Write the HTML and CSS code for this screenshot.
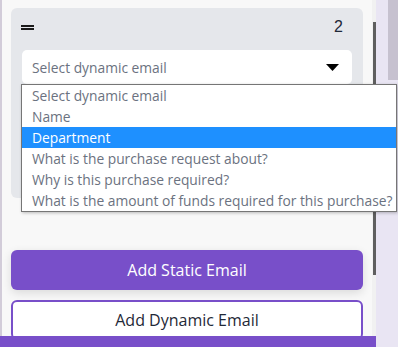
FILE: index.html
```html
<!DOCTYPE html>
<html lang="en">
<head>
<meta charset="utf-8">
<title>Email selector</title>
<link rel="stylesheet" href="styles.css">
</head>
<body>
<div class="app">
  <div class="edge"></div>
  <main class="panel">
    <section class="card">
      <div class="card-head">
        <span class="handle"><span></span><span></span></span>
        <span class="num">2</span>
      </div>
      <div class="select">
        <span class="select-text">Select dynamic email</span>
        <svg class="caret" width="13" height="7" viewBox="0 0 13 7"><path d="M0 0H13L6.5 7Z" fill="#000"/></svg>
      </div>
      <div class="card-rest"></div>
    </section>
    <div class="actions">
      <button class="btn btn-solid">Add Static Email</button>
      <button class="btn btn-outline">Add Dynamic Email</button>
    </div>
  </main>
  <div class="scrollbar"><div class="thumb"></div></div>
  <aside class="side"><div class="side-box"></div></aside>
</div>
<ul class="dropdown">
  <li>Select dynamic email</li>
  <li>Name</li>
  <li class="active">Department</li>
  <li>What is the purchase request about?</li>
  <li>Why is this purchase required?</li>
  <li>What is the amount of funds required for this purchase?</li>
</ul>
<div class="footer-bar"></div>
</body>
</html>
```
FILE: styles.css
```css
* { box-sizing: border-box; }
html, body { margin: 0; padding: 0; }
body {
  width: 398px;
  height: 347px;
  overflow: hidden;
  position: relative;
  font-family: "Open Sans", "Noto Sans", sans-serif;
  background: #e9e5f3;
}
.app {
  display: grid;
  grid-template-columns: 2px 370px 4px 1fr;
  height: 347px;
}
.edge { background: #d2ccd9; }
.panel {
  background: #f8f8f8;
  padding: 8px 9px 0 9px;
  display: flex;
  flex-direction: column;
}
.card {
  background: #e5e7eb;
  border-radius: 6px;
  padding: 9px 11px 0 11px;
  height: 190px;
}
.card-head {
  display: flex;
  justify-content: space-between;
  align-items: center;
  height: 20px;
  padding: 0 9px 0 0;
}
.handle {
  display: flex;
  flex-direction: column;
  gap: 1px;
  margin-left: -1px;
}
.handle span {
  display: block;
  width: 13px;
  height: 2px;
  background: #1a1a1a;
}
.num {
  font-family: "Liberation Sans", Arial, sans-serif;
  font-size: 16px;
  color: #1f2937;
}
.select {
  margin-top: 13px;
  height: 34px;
  background: #fff;
  border-radius: 5px;
  display: flex;
  align-items: center;
  justify-content: space-between;
  padding: 0 13px 0 10px;
}
.select-text {
  font-size: 13.8px;
  color: #6b7280;
}
.caret { margin-top: 1px; }
.actions {
  margin-top: 52px;
  display: flex;
  flex-direction: column;
  gap: 10px;
}
.btn {
  height: 40px;
  border-radius: 6px;
  font-family: "Open Sans", "Noto Sans", sans-serif;
  font-size: 16px;
  cursor: pointer;
}
.btn-solid {
  background: #784fc9;
  color: #fff;
  border: none;
  box-shadow: 0 3px 10px rgba(0,0,0,0.12);
  font-weight: 500;
}
.btn-outline {
  background: #fff;
  color: #1f2937;
  border: 2px solid #784fc9;
}
.scrollbar {
  background: #f1f1f1;
  padding: 22px 0 0 1px;
}
.thumb {
  width: 3px;
  height: 253px;
  background: #5f5f5f;
}
.side { padding-left: 12px; }
.side-box {
  height: 80px;
  background: #c6c1cf;
}
.dropdown {
  position: absolute;
  left: 21px;
  top: 84px;
  width: 376px;
  margin: 0;
  padding: 0;
  list-style: none;
  background: #fff;
  border: 1px solid #767676;
  box-shadow: 1px 1px 3px rgba(0,0,0,0.25);
}
.dropdown li {
  height: 21px;
  line-height: 21px;
  padding-left: 10px;
  font-size: 13.8px;
  color: #6b7280;
  white-space: nowrap;
}
.dropdown li.active {
  background: #1e90ff;
  color: #fff;
}
.footer-bar {
  position: absolute;
  left: 0;
  bottom: 0;
  width: 376px;
  height: 11px;
  background: #784fc9;
}
```
